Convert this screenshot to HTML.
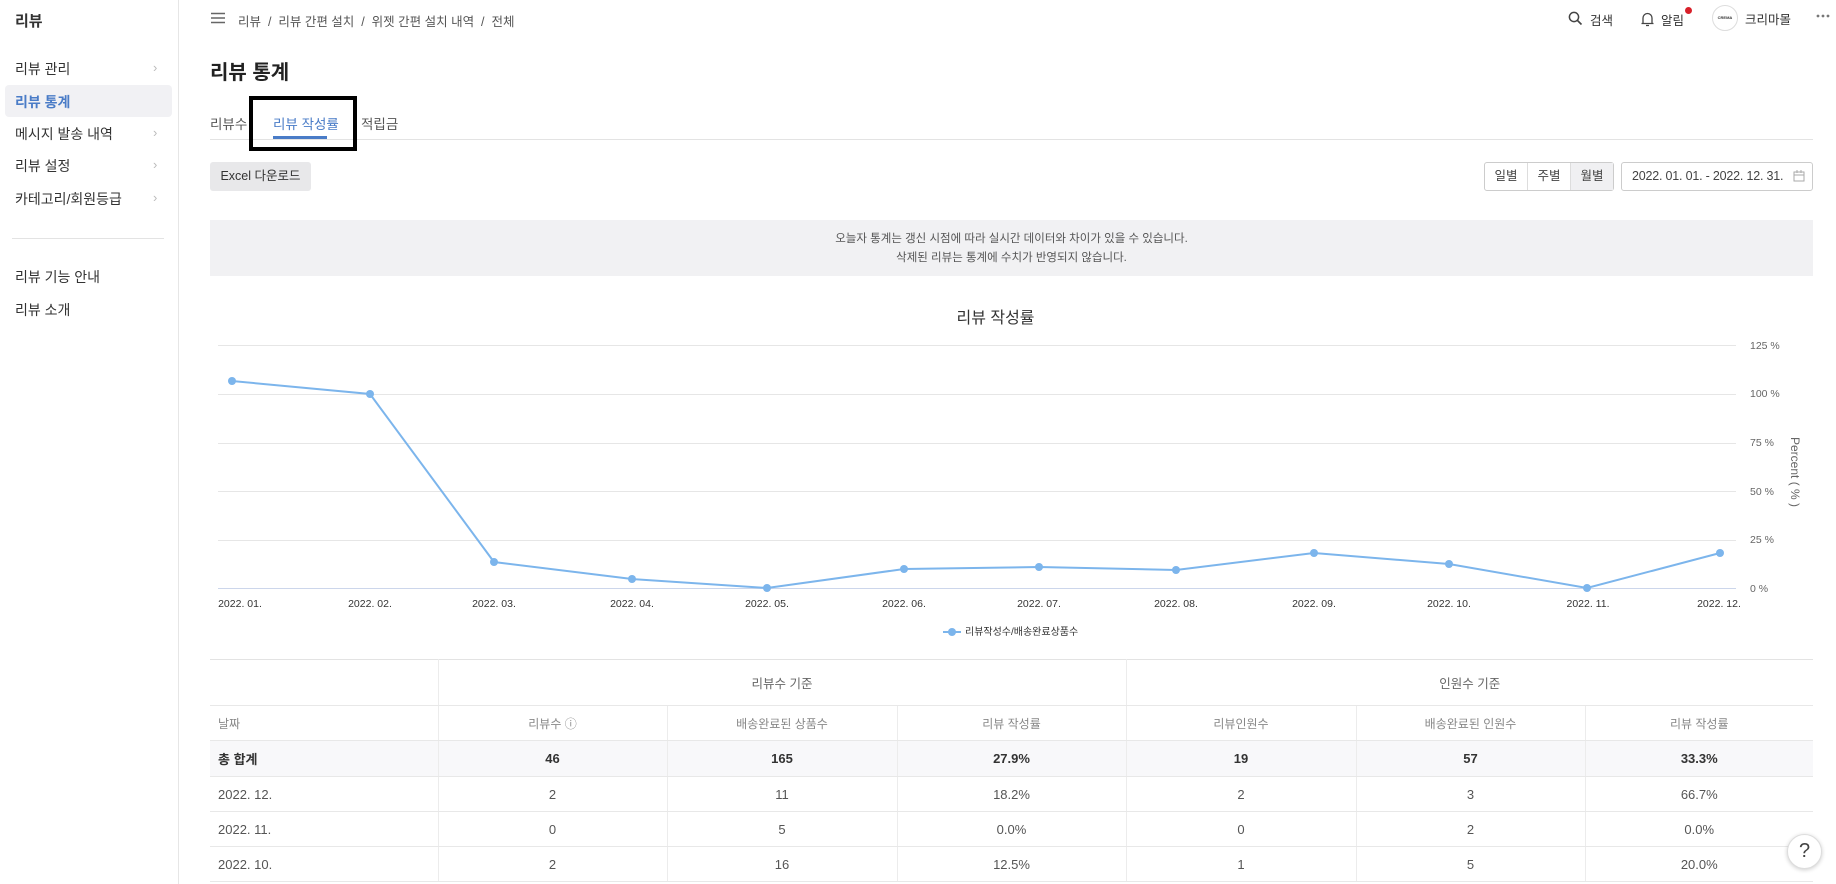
<!DOCTYPE html>
<html><head><meta charset="utf-8"><style>
*{box-sizing:border-box;margin:0;padding:0}
body{width:1836px;height:884px;overflow:hidden;background:#fff;font-family:"Liberation Sans","Noto Sans CJK KR",sans-serif;color:#333;position:relative}
.a{position:absolute;white-space:nowrap}
.side{position:absolute;left:0;top:0;width:179px;height:884px;border-right:1px solid #e6e6e6}
.si{position:absolute;left:15px;font-size:14px;color:#333}
.chev{position:absolute;left:153px;color:#bbb;font-size:13px}
.tbl{position:absolute;left:210px;top:659px;width:1603px;border-collapse:collapse;font-size:13px;color:#555}
.tbl td{border-bottom:1px solid #e8e8e8;border-right:1px solid #ececec;text-align:center;height:35px}
.tbl td:last-child{border-right:none}
.tbl tr.h1 td{height:46px;color:#666;font-size:12.5px}
.tbl tr.h2 td{height:35px;color:#888;font-size:12px}
.tbl tr.tot td{background:#f8f8fa;font-weight:bold;color:#333;height:36px}
.tbl td.l{text-align:left;padding-left:8px}
</style></head><body>
<div class="side">
 <div class="a" style="left:15px;top:10px;font-size:15px;font-weight:bold">리뷰</div>
 <div class="si" style="top:59px">리뷰 관리</div><div class="chev" style="top:60px">›</div>
 <div class="a" style="left:5px;top:85px;width:167px;height:32px;background:#f1f1f4;border-radius:4px"></div>
 <div class="si" style="top:92px;color:#4a7cc7;font-weight:bold">리뷰 통계</div>
 <div class="si" style="top:124px">메시지 발송 내역</div><div class="chev" style="top:125px">›</div>
 <div class="si" style="top:156px">리뷰 설정</div><div class="chev" style="top:157px">›</div>
 <div class="si" style="top:189px">카테고리/회원등급</div><div class="chev" style="top:190px">›</div>
 <div class="a" style="left:12px;top:238px;width:152px;height:1px;background:#e3e3e3"></div>
 <div class="si" style="top:267px">리뷰 기능 안내</div>
 <div class="si" style="top:300px">리뷰 소개</div>
</div>
<svg class="a" style="left:210px;top:12px" width="16" height="12"><path d="M1 1.5H15M1 6H15M1 10.5H15" stroke="#666" stroke-width="1.4"/></svg>
<div class="a" style="left:238px;top:11px;font-size:12.5px;color:#555">리뷰 &nbsp;/&nbsp; 리뷰 간편 설치 &nbsp;/&nbsp; 위젯 간편 설치 내역 &nbsp;/&nbsp; 전체</div>
<svg class="a" style="left:1568px;top:11px" width="15" height="15"><circle cx="6" cy="6" r="4.6" fill="none" stroke="#444" stroke-width="1.5"/><path d="M9.5 9.5L13.5 13.5" stroke="#444" stroke-width="1.6"/></svg>
<div class="a" style="left:1590px;top:10px;font-size:12.5px">검색</div>
<svg class="a" style="left:1640px;top:11px" width="15" height="16"><path d="M3 12V7a4.5 4.5 0 0 1 9 0v5M1.5 12.5h12M6 14.5h3" fill="none" stroke="#444" stroke-width="1.3"/></svg>
<div class="a" style="left:1661px;top:10px;font-size:12.5px">알림</div>
<div class="a" style="left:1685px;top:7px;width:7px;height:7px;border-radius:50%;background:#d8202a"></div>
<div class="a" style="left:1712px;top:5px;width:26px;height:26px;border-radius:50%;border:1px solid #ddd;font-size:4px;text-align:center;line-height:24px;font-weight:bold">CREMA</div>
<div class="a" style="left:1745px;top:9px;font-size:12.5px">크리마몰</div>
<svg class="a" style="left:1816px;top:14px" width="14" height="4"><circle cx="2" cy="2" r="1.4" fill="#777"/><circle cx="7" cy="2" r="1.4" fill="#777"/><circle cx="12" cy="2" r="1.4" fill="#777"/></svg>
<div class="a" style="left:210px;top:56px;font-size:20px;font-weight:bold;color:#222">리뷰 통계</div>
<div class="a" style="left:210px;top:113px;font-size:13.5px;color:#555">리뷰수</div>
<div class="a" style="left:273px;top:113px;font-size:13.5px;color:#4a7cc7">리뷰 작성률</div>
<div class="a" style="left:273px;top:136px;width:54px;height:3px;background:#4a7cc7"></div>
<div class="a" style="left:361px;top:113px;font-size:13.5px;color:#555">적립금</div>
<div class="a" style="left:210px;top:139px;width:1603px;height:1px;background:#e3e3e3"></div>
<div class="a" style="left:249px;top:96px;width:108px;height:55px;border:4px solid #000"></div>
<div class="a" style="left:210px;top:162px;width:101px;height:29px;background:#e8e8ea;border-radius:3px;font-size:12.5px;text-align:center;line-height:29px">Excel 다운로드</div>
<div class="a" style="left:1484px;top:162px;width:130px;height:29px;border:1px solid #ccc;border-radius:3px;display:flex;font-size:12.5px;color:#444">
 <div style="flex:1;text-align:center;line-height:27px;border-right:1px solid #ddd">일별</div>
 <div style="flex:1;text-align:center;line-height:27px;border-right:1px solid #ddd">주별</div>
 <div style="flex:1;text-align:center;line-height:27px;background:#f0f0f2">월별</div></div>
<div class="a" style="left:1621px;top:162px;width:192px;height:29px;border:1px solid #ccc;border-radius:3px;font-size:12.5px;letter-spacing:-0.2px;color:#444;line-height:27px;padding-left:10px">2022. 01. 01. - 2022. 12. 31.</div>
<svg class="a" style="left:1793px;top:170px" width="12" height="12"><rect x="1" y="2" width="10" height="9" fill="none" stroke="#aaa"/><path d="M1 5h10M4 0v3M8 0v3" stroke="#aaa"/></svg>
<div class="a" style="left:210px;top:220px;width:1603px;height:56px;background:#f1f1f3;font-size:11.5px;color:#555;text-align:center;line-height:19px;padding-top:10px">오늘자 통계는 갱신 시점에 따라 실시간 데이터와 차이가 있을 수 있습니다.<br>삭제된 리뷰는 통계에 수치가 반영되지 않습니다.</div>
<div class="a" style="left:0;top:304px;width:1991px;text-align:center;font-size:16px;color:#333">리뷰 작성률</div>
<svg class="a" style="left:0;top:0" width="1836" height="650" font-family="Liberation Sans,sans-serif">
 <g stroke="#e6e6e6" stroke-width="1">
  <path d="M218 345.5H1736M218 394.5H1736M218 443.5H1736M218 491.5H1736M218 540.5H1736"/>
 </g>
 <path d="M218 588.5H1736" stroke="#ccd6eb"/>
 <g fill="#666" font-size="10.5">
  <text x="1750" y="349">125 %</text><text x="1750" y="397">100 %</text><text x="1750" y="446">75 %</text><text x="1750" y="495">50 %</text><text x="1750" y="543">25 %</text><text x="1750" y="592">0 %</text>
 </g>
 <text transform="translate(1791,437) rotate(90)" font-size="12" fill="#666">Percent ( % )</text>
 <g fill="#333" font-size="10.5" text-anchor="middle">
  <text x="240" y="607">2022. 01.</text><text x="370" y="607">2022. 02.</text><text x="494" y="607">2022. 03.</text><text x="632" y="607">2022. 04.</text><text x="767" y="607">2022. 05.</text><text x="904" y="607">2022. 06.</text><text x="1039" y="607">2022. 07.</text><text x="1176" y="607">2022. 08.</text><text x="1314" y="607">2022. 09.</text><text x="1449" y="607">2022. 10.</text><text x="1588" y="607">2022. 11.</text><text x="1719" y="607">2022. 12.</text>
 </g>
 <polyline fill="none" stroke="#7cb5ec" stroke-width="2" points="232,381 370,394 494,562 632,579 767,588 904,569 1039,567 1176,570 1314,553 1449,564 1587,588 1720,553"/>
 <g fill="#7cb5ec">
  <circle cx="232" cy="381" r="4"/><circle cx="370" cy="394" r="4"/><circle cx="494" cy="562" r="4"/><circle cx="632" cy="579" r="4"/><circle cx="767" cy="588" r="4"/><circle cx="904" cy="569" r="4"/><circle cx="1039" cy="567" r="4"/><circle cx="1176" cy="570" r="4"/><circle cx="1314" cy="553" r="4"/><circle cx="1449" cy="564" r="4"/><circle cx="1587" cy="588" r="4"/><circle cx="1720" cy="553" r="4"/>
 </g>
 <path d="M943 632H961" stroke="#7cb5ec" stroke-width="2"/><circle cx="952" cy="632" r="4" fill="#7cb5ec"/>
 <text x="965" y="635" font-size="10" fill="#333">리뷰작성수/배송완료상품수</text>
</svg>
<table class="tbl" style="border-top:1px solid #e3e3e3">
<tr class="h1"><td style="width:228px"></td><td colspan="3">리뷰수 기준</td><td colspan="3">인원수 기준</td></tr>
<tr class="h2"><td class="l">날짜</td><td style="width:229px">리뷰수 ⓘ</td><td style="width:230px">배송완료된 상품수</td><td style="width:229px">리뷰 작성률</td><td style="width:230px">리뷰인원수</td><td style="width:229px">배송완료된 인원수</td><td>리뷰 작성률</td></tr>
<tr class="tot"><td class="l">총 합계</td><td>46</td><td>165</td><td>27.9%</td><td>19</td><td>57</td><td>33.3%</td></tr>
<tr><td class="l">2022. 12.</td><td>2</td><td>11</td><td>18.2%</td><td>2</td><td>3</td><td>66.7%</td></tr>
<tr><td class="l">2022. 11.</td><td>0</td><td>5</td><td>0.0%</td><td>0</td><td>2</td><td>0.0%</td></tr>
<tr><td class="l">2022. 10.</td><td>2</td><td>16</td><td>12.5%</td><td>1</td><td>5</td><td>20.0%</td></tr>
</table>
<div class="a" style="left:1787px;top:834px;width:35px;height:35px;border-radius:50%;background:#fff;border:1px solid #ddd;box-shadow:0 1px 4px rgba(0,0,0,.2);text-align:center;line-height:33px;font-size:20px;color:#444">?</div>
</body></html>
